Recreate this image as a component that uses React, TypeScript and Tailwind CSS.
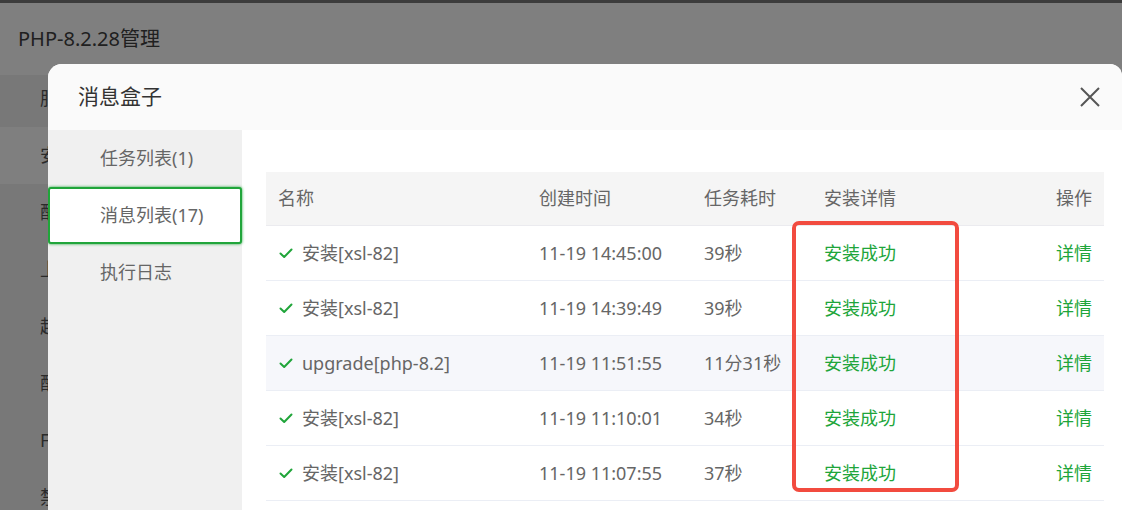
import React from 'react';

type Row = { name: string; time: string; cost: string; hover?: boolean };

const rows: Row[] = [
  { name: '安装[xsl-82]', time: '11-19 14:45:00', cost: '39秒' },
  { name: '安装[xsl-82]', time: '11-19 14:39:49', cost: '39秒' },
  { name: 'upgrade[php-8.2]', time: '11-19 11:51:55', cost: '11分31秒', hover: true },
  { name: '安装[xsl-82]', time: '11-19 11:10:01', cost: '34秒' },
  { name: '安装[xsl-82]', time: '11-19 11:07:55', cost: '37秒' },
];

// 被遮罩挡住的左侧菜单，只露出第一个字
const backMenu = ['服', '安', '配', '上', '超', '配', 'F', '禁'];

const Check = () => (
  <svg width="14" height="11" viewBox="0 0 14 11" fill="none" className="shrink-0">
    <path d="M1.5 5.5 L5.2 9 L12.5 1.5" stroke="#20a53a" strokeWidth="2" strokeLinecap="round" strokeLinejoin="round" />
  </svg>
);

const App: React.FC = () => {
  return (
    <div
      className="relative w-[1122px] h-[510px] overflow-hidden bg-[#787878]"
      style={{ fontFamily: '"Noto Sans", "Noto Sans CJK SC", sans-serif' }}
    >
      {/* Background page under overlay */}
      <div className="h-[3px] bg-[#3c3c3c]" />
      <div className="h-[72px] bg-[#7f7f7f] flex items-center pl-[18px] text-[20px] text-[#202020]">
        PHP-8.2.28管理
      </div>
      <div className="flex flex-col w-[48px] -mt-[5px]">
        {backMenu.map((m, i) => (
          <div
            key={i}
            className={`h-[57px] flex items-center pl-[40px] text-[18px] text-[#2a2a2a] ${i === 1 ? 'bg-[#7f7f7f]' : ''}`}
          >
            {m}
          </div>
        ))}
      </div>

      {/* Modal */}
      <div className="absolute left-[48px] top-[64px] right-0 bottom-[-40px] bg-white rounded-tl-[14px] rounded-tr-[12px] overflow-hidden flex flex-col">
        <div className="h-[66px] shrink-0 bg-[#fafafa] flex items-center justify-between pl-[30px] pr-[22px]">
          <span className="text-[21px] text-[#333]">消息盒子</span>
          <svg width="20" height="20" viewBox="0 0 20 20" fill="none">
            <path d="M1 1 L19 19 M19 1 L1 19" stroke="#555" strokeWidth="2" />
          </svg>
        </div>

        <div className="flex flex-1">
          {/* Sidebar */}
          <div className="w-[194px] shrink-0 bg-[#f0f0f0] flex flex-col">
            <div className="h-[57px] flex items-center pl-[52px] text-[18px] text-[#666]">任务列表(1)</div>
            <div className="h-[57px] flex items-center pl-[50px] text-[18px] text-[#666] bg-white border-2 border-[#20a53a] rounded-[3px] shadow-[0_0_3px_#20a53a]">
              消息列表(17)
            </div>
            <div className="h-[57px] flex items-center pl-[52px] text-[18px] text-[#666]">执行日志</div>
          </div>

          {/* Content */}
          <div className="flex-1 pl-[24px] pr-[18px] pt-[42px]">
            <div className="text-[18px] text-[#666]">
              <div className="grid grid-cols-[273px_165px_120px_1fr_auto] h-[54px] items-center bg-[#f5f5f5] border-b border-[#ebebef]">
                <div className="pl-3">名称</div>
                <div>创建时间</div>
                <div>任务耗时</div>
                <div>安装详情</div>
                <div className="pr-3 text-right">操作</div>
              </div>
              {rows.map((r, i) => (
                <div
                  key={i}
                  className={`grid grid-cols-[273px_165px_120px_1fr_auto] h-[55px] items-center border-b border-[#ebeef5] ${r.hover ? 'bg-[#f6f7fb]' : ''}`}
                >
                  <div className="pl-[13px] flex items-center gap-[9px]">
                    <Check />
                    <span>{r.name}</span>
                  </div>
                  <div>{r.time}</div>
                  <div>{r.cost}</div>
                  <div className="text-[#20a53a]">安装成功</div>
                  <div className="pr-3 text-right text-[#20a53a]">详情</div>
                </div>
              ))}
            </div>
          </div>
        </div>
      </div>

      {/* Red annotation box */}
      <div className="absolute left-[792px] top-[221px] w-[167px] h-[271px] border-4 border-[#f24b3f] rounded-[7px]" />
    </div>
  );
};

export default App;
